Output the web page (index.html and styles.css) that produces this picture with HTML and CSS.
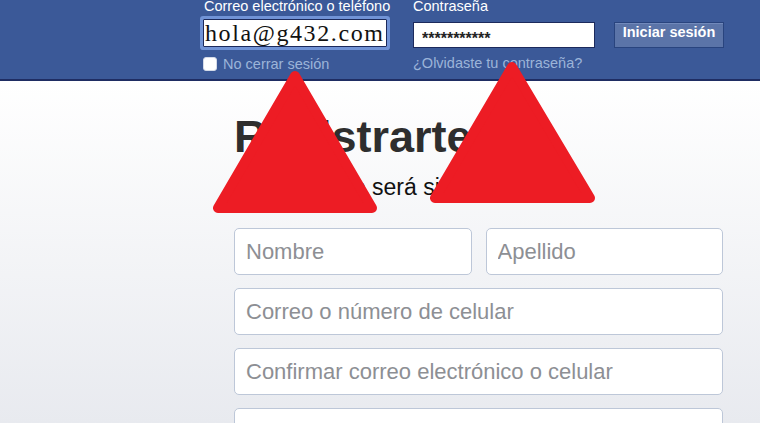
FILE: index.html
```html
<!DOCTYPE html>
<html lang="es">
<head>
    <meta charset="UTF-8">
    <meta name="viewport" content="width=device-width, initial-scale=1.0">
    <title>Registrarte</title>
    <link rel="stylesheet" href="styles.css">
</head>
<body>
    <header class="topbar">
        <div class="login-col col-email">
            <label class="login-label" for="loginEmail">Correo electrónico o teléfono</label>
            <input type="text" id="loginEmail" class="email-field" value="hola@g432.com">
            <label class="remember">
                <input type="checkbox" class="remember-box"> No cerrar sesión
            </label>
        </div>
        <div class="login-col col-pass">
            <label class="login-label" for="loginPass">Contraseña</label>
            <input type="text" id="loginPass" class="pass-field" value="***********" readonly>
            <a href="#" class="forgot">¿Olvidaste tu contraseña?</a>
        </div>
        <button type="button" class="login-btn">Iniciar sesión</button>
    </header>

    <main class="signup">
        <div class="signup-box">
            <h1>Registrarte</h1>
            <p class="subtitle">Es gratis y lo será siempre.</p>
            <form class="fields">
                <input type="text" class="field" placeholder="Nombre">
                <input type="text" class="field" placeholder="Apellido">
                <input type="text" class="field wide" placeholder="Correo o número de celular">
                <input type="text" class="field wide" placeholder="Confirmar correo electrónico o celular">
                <input type="password" class="field wide" placeholder="Contraseña nueva">
            </form>
        </div>
    </main>

    <!-- red markers drawn over the page -->
    <svg class="markers" width="760" height="423" viewBox="0 0 760 423">
        <polygon points="295,76 218,208 372,208" />
        <polygon points="512,67 435,198 590,198" />
    </svg>
</body>
</html>
```

FILE: styles.css
```css
* {
    margin: 0;
    padding: 0;
    box-sizing: border-box;
}

body {
    font-family: "Liberation Sans", Arial, sans-serif;
    position: relative;
    height: 423px;
    overflow: hidden;
    background-color: #fff;
}

.topbar {
    display: flex;
    height: 81px;
    padding-left: 203px;
    background-color: #3b5998;
    border-bottom: 2px solid #1f2d63;
}

.login-col {
    display: flex;
    flex-direction: column;
}

.col-email {
    width: 184px;
}

.col-pass {
    width: 182px;
    margin-left: 26px;
}

.login-label {
    color: #fff;
    font-size: 14.5px;
    line-height: 12px;
    padding-left: 1px;
    white-space: nowrap;
}

.col-pass .login-label {
    padding-left: 0;
}

.email-field {
    margin-top: 7px;
    height: 28px;
    padding: 0 0 0 1px;
    border: 1px solid #1c2a5c;
    border-radius: 1px;
    box-shadow: 0 0 0 3px #7193d6;
    background-color: #fff;
    color: #111;
    font-family: "Liberation Serif", "Times New Roman", serif;
    font-size: 24px;
    letter-spacing: 1.6px;
    outline: none;
}

.pass-field {
    margin-top: 10px;
    height: 26px;
    padding: 8px 0 0 8px;
    border: 1px solid #1c2a5c;
    background-color: #fff;
    color: #222;
    font-family: "Liberation Sans", Arial, sans-serif;
    font-weight: bold;
    font-size: 16px;
    outline: none;
}

.remember {
    display: flex;
    align-items: center;
    gap: 6px;
    margin-top: 10px;
    color: #9cb4d8;
    font-size: 14.5px;
    line-height: 14px;
    white-space: nowrap;
}

.remember-box {
    appearance: none;
    width: 14px;
    height: 14px;
    border-radius: 3px;
    background-color: #fff;
    border: 1px solid #d5dbe8;
}

.forgot {
    margin-top: 8px;
    color: #9cb4d8;
    font-size: 14.5px;
    line-height: 14px;
    text-decoration: none;
    white-space: nowrap;
}

.login-btn {
    margin-top: 22px;
    margin-left: 19px;
    width: 110px;
    height: 26px;
    padding: 0 0 6px;
    background-color: #5b74a8;
    border: 1px solid #29447e;
    box-shadow: inset 0 1px 0 #7189bb;
    color: #fff;
    font-family: "Liberation Sans", Arial, sans-serif;
    font-weight: bold;
    font-size: 14.5px;
}

.signup {
    height: 342px;
    padding: 33px 0 0 234px;
    overflow: hidden;
    background: linear-gradient(#ffffff, #e8eaef);
}

.signup-box {
    width: 489px;
}

.signup-box h1 {
    font-size: 45px;
    line-height: 45px;
    font-weight: bold;
    color: #2e2e2e;
}

.subtitle {
    margin-top: 16.5px;
    font-size: 23px;
    line-height: 23px;
    color: #111;
}

.fields {
    display: grid;
    grid-template-columns: minmax(0, 1fr) minmax(0, 1fr);
    gap: 13px 14px;
    margin-top: 29.5px;
}

.field {
    width: 100%;
    min-width: 0;
    height: 47px;
    padding: 0 11px;
    border: 1px solid #bdc7d8;
    border-radius: 5px;
    background-color: #fff;
    font-family: "Liberation Sans", Arial, sans-serif;
    font-size: 22px;
    color: #1d2129;
    outline: none;
}

.field::placeholder {
    color: #8d8f94;
}

.field.wide {
    grid-column: 1 / -1;
}

.markers {
    position: absolute;
    top: 0;
    left: 0;
    pointer-events: none;
}

.markers polygon {
    fill: #ed1c24;
    stroke: #ed1c24;
    stroke-width: 10;
    stroke-linejoin: round;
}
```
